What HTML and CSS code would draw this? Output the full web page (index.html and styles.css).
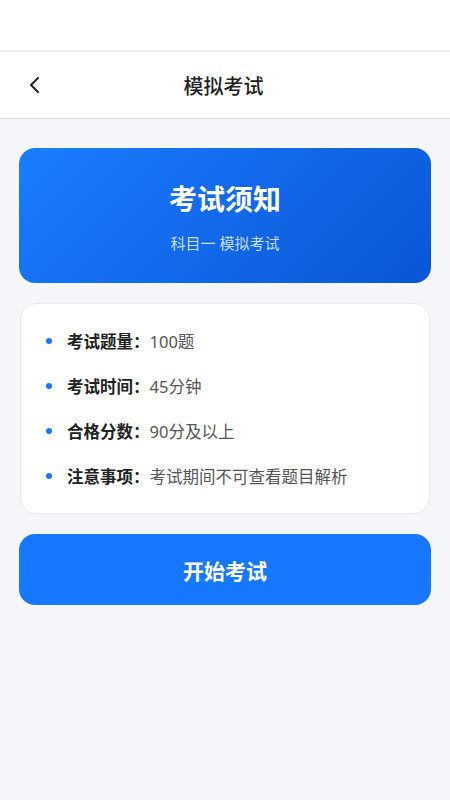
FILE: index.html
```html
<!doctype html>
<html lang="zh-CN">
	<head>
		<meta charset="UTF-8" />
		<meta name="viewport" content="width=device-width, initial-scale=1.0" />
		<title>模拟考试</title>
		<link rel="stylesheet" href="styles.css">
	</head>
	<body>
		<div class="status-bar"></div>
		<div class="nav-bar">
			<span class="back">
				<svg width="14" height="18" viewBox="0 0 14 18" fill="none">
					<path d="M10 2 L3 9 L10 16" stroke="#222" stroke-width="2" stroke-linecap="round" stroke-linejoin="round" />
				</svg>
			</span>
			<div class="nav-title">模拟考试</div>
		</div>

		<div class="page">
			<!-- hero -->
			<div class="hero">
				<div class="hero-title">考试须知</div>
				<div class="hero-sub">科目一 模拟考试</div>
			</div>

			<!-- rules -->
			<div class="info-card">
				<div class="info-row">
					<span class="dot"></span>
					<span class="label">考试题量：</span>
					<span class="value">100题</span>
				</div>
				<div class="info-row">
					<span class="dot"></span>
					<span class="label">考试时间：</span>
					<span class="value">45分钟</span>
				</div>
				<div class="info-row">
					<span class="dot"></span>
					<span class="label">合格分数：</span>
					<span class="value">90分及以上</span>
				</div>
				<div class="info-row">
					<span class="dot"></span>
					<span class="label">注意事项：</span>
					<span class="value">考试期间不可查看题目解析</span>
				</div>
			</div>

			<button class="start-btn">开始考试</button>
		</div>
	</body>
</html>
```

FILE: styles.css
```css
body {
	margin: 0;
	width: 450px;
	height: 800px;
	overflow: hidden;
	background-color: #f5f6f9;
	font-family: "Noto Sans", "Noto Sans CJK SC", sans-serif;
	color: #222;
}
.status-bar {
	height: 50px;
	background-color: #fff;
	border-bottom: 2px solid #f0f0f0;
}
.nav-bar {
	position: relative;
	height: 66px;
	background-color: #fff;
	border-bottom: 1px solid #e6e6e6;
	display: flex;
	align-items: center;
	justify-content: center;
}
.back {
	position: absolute;
	left: 28px;
	top: 24px;
	display: flex;
}
.nav-title {
	font-size: 20px;
	font-weight: 500;
	color: #222;
	margin-left: -3px;
}
.page {
	padding: 29px 19px 0;
	display: flex;
	flex-direction: column;
	gap: 20px;
}
.hero {
	height: 135px;
	border-radius: 16px;
	background: linear-gradient(135deg, #1a7dff 0%, #0a56d4 100%);
	display: flex;
	flex-direction: column;
	align-items: center;
	justify-content: center;
	color: #fff;
}
.hero-title {
	font-size: 28px;
	font-weight: 700;
	line-height: 36px;
	margin-top: 2px;
}
.hero-sub {
	margin-top: 16px;
	font-size: 15px;
	line-height: 20px;
	color: rgba(255, 255, 255, 0.78);
}
.info-card {
	margin: 0 1px;
	background-color: #fff;
	border: 1px solid #e8e9ec;
	border-radius: 16px;
	padding: 14px 0 15px 25px;
}
.info-row {
	height: 45px;
	display: flex;
	align-items: center;
	font-size: 16.5px;
}
.dot {
	width: 6px;
	height: 6px;
	border-radius: 50%;
	background-color: #1677ff;
	margin-right: 15px;
}
.label {
	font-weight: 700;
	color: #222;
}
.value {
	color: #555;
}
.start-btn {
	height: 71px;
	border: none;
	border-radius: 16px;
	background-color: #1677ff;
	color: #fff;
	font-family: inherit;
	font-size: 21px;
	font-weight: 700;
	cursor: pointer;
}
```
